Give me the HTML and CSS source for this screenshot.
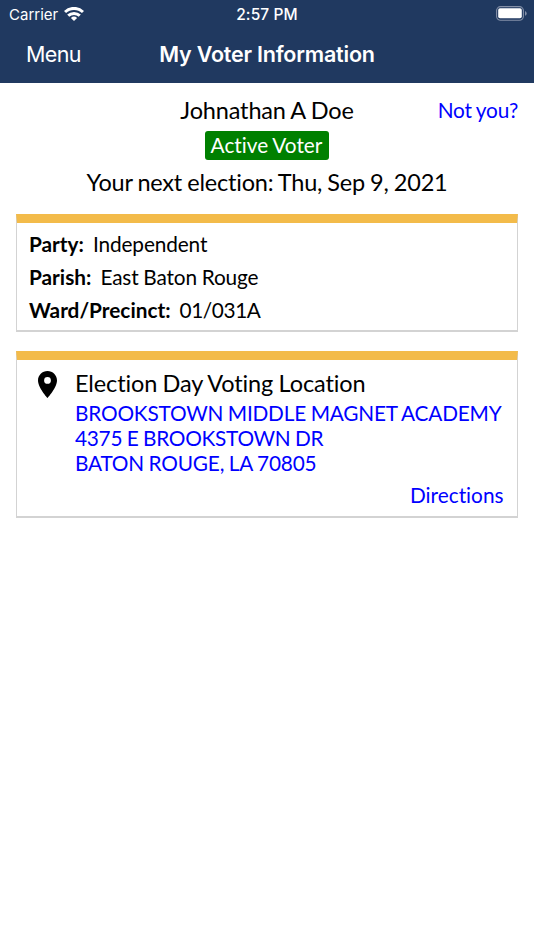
FILE: index.html
```html
<!DOCTYPE html>
<html lang="en">
<head>
<meta charset="utf-8">
<title>My Voter Information</title>
<link rel="stylesheet" href="styles.css">
</head>
<body>
<header class="top">
  <div class="status">
    <div class="carrier"><span class="carrier-name">Carrier</span>
      <svg class="wifi" width="20" height="14" viewBox="0 0 20 14" fill="none" stroke="#fff" stroke-width="3"><path d="M1 5a13 13 0 0 1 18 0"/><path d="M4.200 8.700a8.400 8.400 0 0 1 11.600 0"/><path d="M10 14 6.900 10.900a4.500 4.500 0 0 1 6.200 0z" fill="#fff" stroke="none"/></svg>
    </div>
    <span class="time">2:57 PM</span>
    <svg class="battery" width="31" height="15" viewBox="0 0 31 15"><rect x=".6" y=".6" width="26.8" height="13.6" rx="4" fill="none" stroke="#8490a8" stroke-width="1.1"/><rect x="2.2" y="2.3" width="23.6" height="10" rx="1.8" fill="#fff"/><path d="M29 5q1.700.8 1.700 2.400T29 9.800z" fill="#8490a8"/></svg>
  </div>
  <nav class="nav"><a class="menu">Menu</a><h1 class="title">My Voter Information</h1></nav>
</header>
<main class="page">
  <section class="summary">
    <div class="name-row"><span class="name">Johnathan A Doe</span><a class="not-you">Not you?</a></div>
    <div class="badge"><span class="badge-text">Active Voter</span></div>
    <p class="next"><span class="next-text">Your next election: Thu, Sep 9, 2021</span></p>
  </section>
  <section class="card details">
    <p class="detail"><b class="label">Party:</b><span>Independent</span></p>
    <p class="detail"><b class="label">Parish:</b><span>East Baton Rouge</span></p>
    <p class="detail"><b class="label">Ward/Precinct:</b><span class="ward">01/031A</span></p>
  </section>
  <section class="card location">
    <svg class="pin" width="19" height="27" viewBox="5 2 14 20" preserveAspectRatio="none"><path d="M12 2C8.13 2 5 5.13 5 9c0 5.25 7 13 7 13s7-7.75 7-13c0-3.87-3.13-7-7-7zm0 9.500a2.500 2.500 0 1 1 0-5 2.500 2.500 0 0 1 0 5z"/></svg>
    <div class="place">
      <h2 class="heading"><span class="heading-text">Election Day Voting Location</span></h2>
      <a class="address"><span>BROOKSTOWN MIDDLE MAGNET ACADEMY</span><span class="street">4375 E BROOKSTOWN DR</span><span>BATON ROUGE, LA 70805</span></a>
      <a class="directions">Directions</a>
    </div>
  </section>
</main>
</body>
</html>
```
FILE: styles.css
```css
* { box-sizing: border-box; margin: 0; }
body { background: #fff; color: #000; font-family: Lato, sans-serif; font-variant-ligatures: none; letter-spacing: -.12px; word-spacing: -.5px; }
.top { height: 83px; background: #203960; color: #fff; font-family: Inter, sans-serif; word-spacing: 0; letter-spacing: 0; }
.status { display: grid; grid-template-columns: 1fr auto 1fr; align-items: center; height: 27px; padding: 0 7px 0 9px; font-size: 15px; }
.carrier { display: flex; align-items: center; gap: 6px; }
.carrier-name { padding-top: 1px; }
.time { font-weight: 500; font-size: 15.5px; letter-spacing: .1px; margin-right: 2px; padding-top: 1px; }
.battery { justify-self: end; }
.nav { display: grid; grid-template-columns: 1fr auto 1fr; align-items: center; height: 54px; padding: 0 26px; }
.menu { font-size: 21.5px; letter-spacing: -.6px; }
.title { font-size: 21.5px; font-weight: 600; white-space: nowrap; letter-spacing: -.2px; }
.page { padding: 10px 16px; }
.summary { display: flex; flex-direction: column; align-items: center; height: 121px; }
.name-row { display: grid; grid-template-columns: 1fr auto 1fr; align-items: center; width: 100%; height: 32px; }
.name { grid-column: 2; font-size: 23.5px; line-height: 28px; padding-top: 1px; letter-spacing: -.16px; }
.not-you { justify-self: end; font-size: 20.8px; letter-spacing: -.2px; color: #0000ff; }
.badge { display: flex; align-items: center; justify-content: center; width: 124px; height: 29px; margin-top: 6px; border-radius: 3px; background: #008000; color: #fff; font-size: 20.8px; line-height: 28px; letter-spacing: 0; }
.badge-text { margin: 0 1px 1px 0; }
.next { margin-top: 8px; font-size: 23.5px; line-height: 29px; white-space: nowrap; letter-spacing: -.2px; word-spacing: -.7px; }
.card { border: 1px solid #d3d3d3; border-top: 9px solid #f3bb4a; border-bottom-width: 2px; }
.details { height: 118px; padding: 5px 12px; font-size: 20.8px; }
.detail { display: flex; gap: 9px; height: 32.7px; line-height: 32px; }
.detail:last-child { line-height: 33px; }
.label { letter-spacing: 0; }
.ward { letter-spacing: -.4px; }
.location { display: flex; gap: 18px; height: 167px; margin-top: 19px; padding: 8px 13.5px 0 21px; }
.pin { margin-top: 3px; flex: none; }
.place { display: flex; flex-direction: column; flex: 1; min-width: 0; }
.heading { font-size: 23.5px; line-height: 30px; font-weight: 400; }
.address { display: flex; flex-direction: column; align-items: flex-start; color: #0000ff; font-size: 20.8px; line-height: 24.8px; letter-spacing: -.2px; white-space: nowrap; margin-top: 3px; }
.street { letter-spacing: -.27px; }
.directions { align-self: flex-end; margin-top: 7px; color: #0000ff; font-size: 20.8px; line-height: 25px; letter-spacing: 0; }
```
